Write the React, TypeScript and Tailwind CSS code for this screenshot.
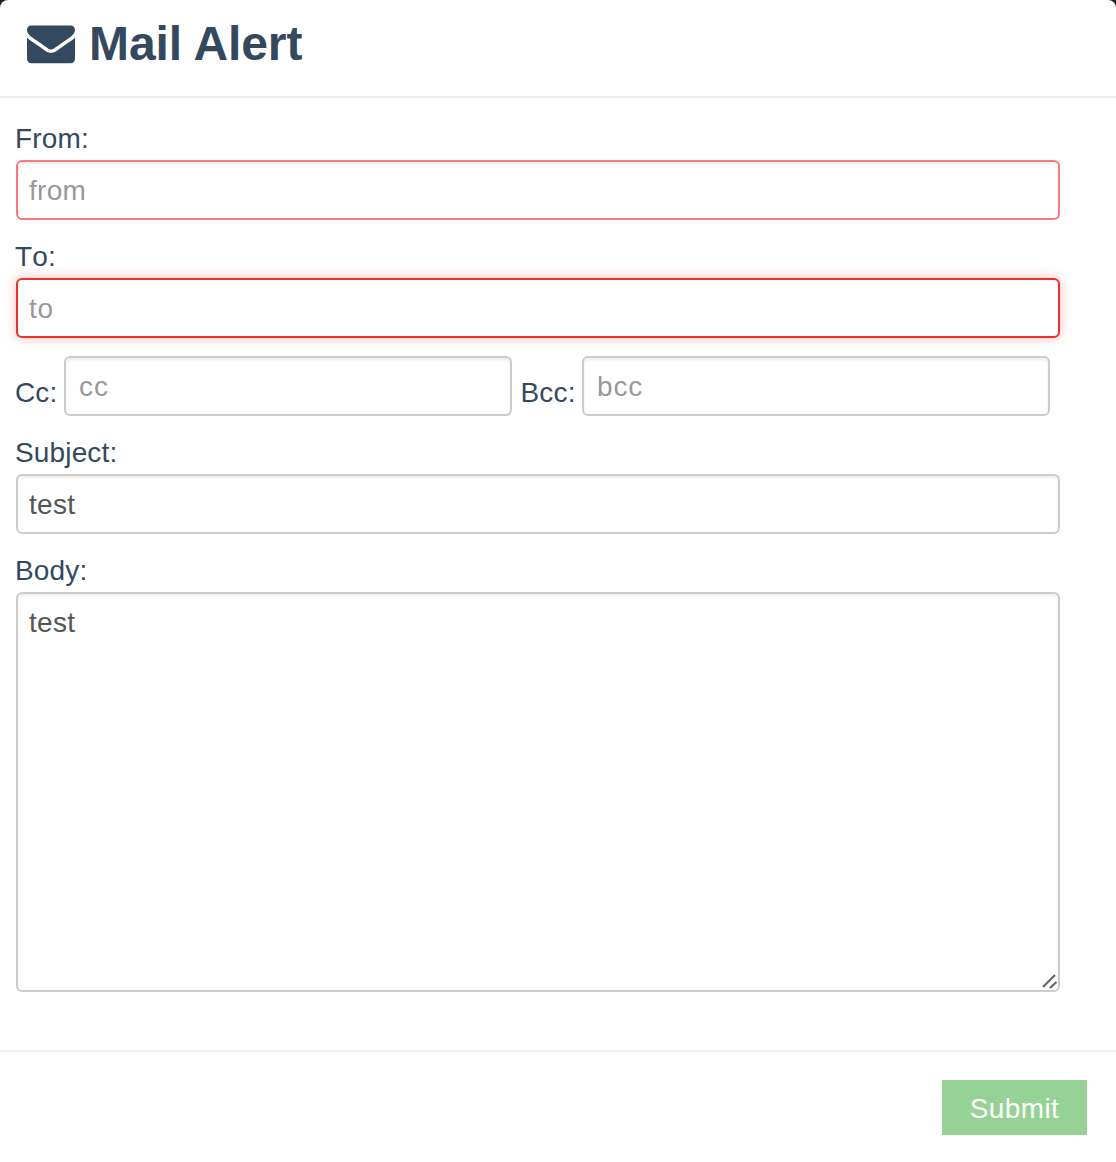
import type { ReactNode } from "react";

const inputBase =
  "block h-[60px] rounded-[6px] border-2 bg-white pt-[2px] text-[28px] leading-[36px] text-[#555] outline-none placeholder:text-[#999] placeholder:opacity-100";
const plain = "border-[#ccc] shadow-[inset_0_2px_3px_rgba(0,0,0,0.075)]";

function Label({ children, htmlFor }: { children: ReactNode; htmlFor: string }) {
  return (
    <label
      htmlFor={htmlFor}
      className="block h-[40px] pt-px pl-[15px] text-[28px] leading-[40px] tracking-[0.15px] whitespace-nowrap [font-kerning:none]"
    >
      {children}
    </label>
  );
}

function EnvelopeIcon() {
  return (
    <svg viewBox="0 240 1792 1456" className="mt-[25px] h-[39px] w-[48px] shrink-0" fill="currentColor" aria-hidden="true">
      <path d="M1792 710v794q0 66-47 113t-113 47h-1472q-66 0-113-47t-47-113v-794q44 49 101 87 362 246 497 345 57 42 92.5 65.5t94.5 48 110 24.5h2q51 0 110-24.5t94.5-48 92.5-65.5q170-123 498-345 57-39 100-87zm0-294q0 79-49 151t-122 123q-376 261-468 325-10 7-42.5 31t-54 38.5-52 32.5-57.5 27-50 9h-2q-23 0-50-9t-57.5-27-52-32.5-54-38.5-42.5-31q-91-64-262-182.5t-205-142.5q-62-42-117-115.5t-55-136.5q0-78 41.5-130t118.5-52h1472q65 0 112.5 47t47.5 113z" />
    </svg>
  );
}

export default function App() {
  return (
    <div className="h-[1162px] w-[1116px] overflow-hidden bg-[#231f20] font-['Liberation_Sans',Arial,sans-serif] text-[#34495e]">
      <div className="flex h-full flex-col rounded-t-[8px] bg-white">
        <header className="flex h-[98px] shrink-0 items-start border-b-2 border-[#eee] pl-[27px]">
          <EnvelopeIcon />
          <h1 className="mt-[14px] ml-[14px] text-[48px] leading-[60px] font-bold tracking-[-0.1px] whitespace-nowrap">Mail Alert</h1>
        </header>

        <main className="flex h-[952px] shrink-0 flex-col pt-[20px]">
          <Label htmlFor="from">From:</Label>
          <input
            id="from"
            placeholder="from"
            className={`${inputBase} mt-[2px] ml-4 w-[1044px] border-[#fa787e] px-[11px] tracking-[0.3px] shadow-[inset_0_2px_3px_rgba(0,0,0,0.075)]`}
          />
          <div className="mt-4">
            <Label htmlFor="to">To:</Label>
          </div>
          <input
            id="to"
            placeholder="to"
            className={`${inputBase} mt-[2px] ml-4 w-[1044px] border-[#e9322d] px-[11px] tracking-[0.6px] shadow-[0_0_12px_#f8b9b7]`}
          />
          <div className="mt-[18px] flex h-[60px] pl-[15px]">
            <label htmlFor="cc" className="w-[49px] pt-[17px] text-[28px] leading-[40px] tracking-[0.15px]">Cc:</label>
            <input id="cc" placeholder="cc" className={`${inputBase} ${plain} w-[448px] px-[13px] tracking-[0.9px]`} />
            <label htmlFor="bcc" className="w-[70px] pt-[17px] pl-[8.5px] text-[28px] leading-[40px] tracking-[0.15px]">Bcc:</label>
            <input id="bcc" placeholder="bcc" className={`${inputBase} ${plain} w-[468px] px-[13px] tracking-[0.9px]`} />
          </div>
          <div className="mt-4">
            <Label htmlFor="subject">Subject:</Label>
          </div>
          <input id="subject" defaultValue="test" className={`${inputBase} ${plain} mt-[2px] ml-4 w-[1044px] px-[11px] tracking-[0.3px]`} />
          <div className="mt-4">
            <Label htmlFor="body">Body:</Label>
          </div>
          <div className="relative mt-[2px] ml-4 h-[400px] w-[1044px]">
            <textarea
              id="body"
              defaultValue="test"
              className="block h-full w-full resize-none rounded-[6px] border-2 border-[#ccc] bg-white px-[11px] py-[9px] text-[28px] leading-[40px] tracking-[0.3px] text-[#555] shadow-[inset_0_2px_3px_rgba(0,0,0,0.075)] outline-none"
            />
            <svg className="absolute right-[2px] bottom-[2px] h-4 w-4" viewBox="0 0 16 16" fill="none" stroke="#666" strokeWidth="2.2" aria-hidden="true">
              <path d="M1 13 13 1M8 14 14.5 8" />
            </svg>
          </div>
        </main>

        <footer className="flex grow items-start justify-end border-t-2 border-[#eee] pt-[28px] pr-[29px]">
          <button className="h-[55px] w-[145px] bg-[#96d296] pt-[2px] text-[28px] leading-[53px] tracking-[0.4px] text-white">Submit</button>
        </footer>
      </div>
    </div>
  );
}
